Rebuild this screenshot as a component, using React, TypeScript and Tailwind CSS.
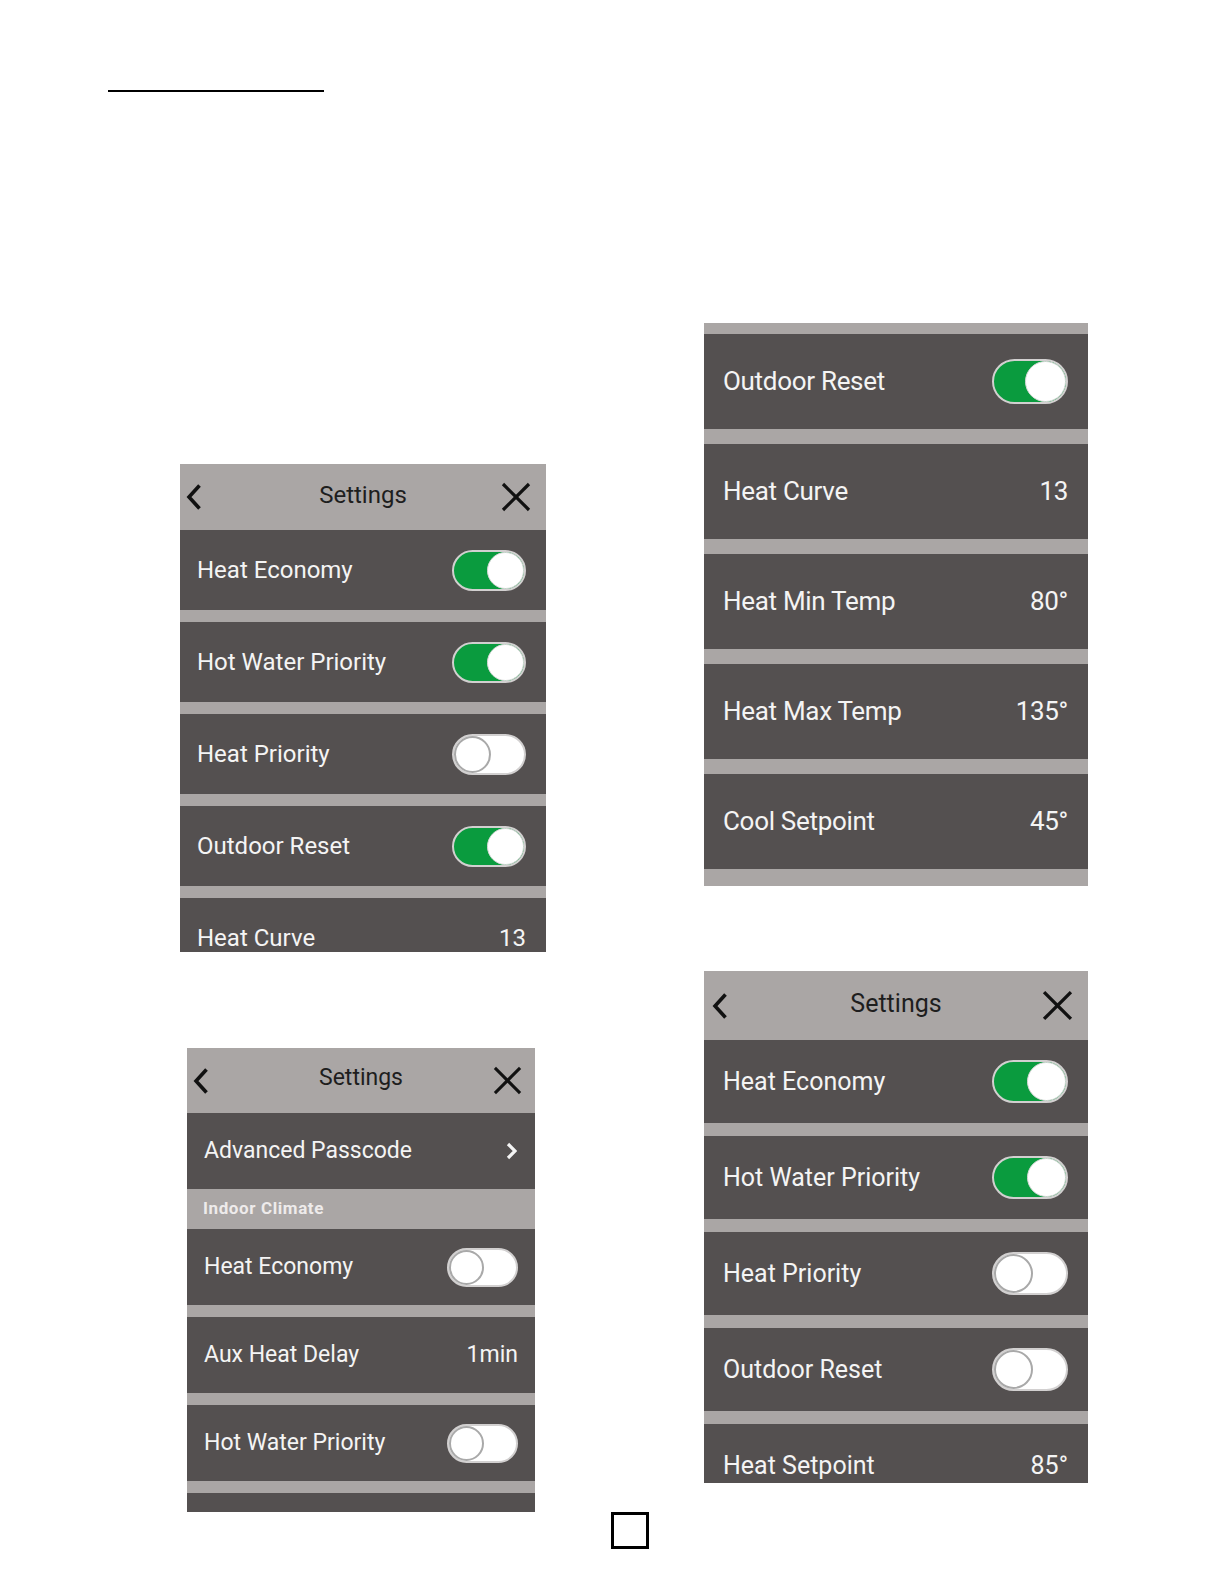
import React from "react";

type Row =
  | { kind: "toggle"; label: string; on: boolean }
  | { kind: "value"; label: string; value: string }
  | { kind: "link"; label: string }
  | { kind: "section"; label: string };

interface Sizes {
  row: string;
  gap: string;
  pad: string;
  track: string;
  knob: string;
}

const DARK = "bg-[#545050]";
const LIGHT = "bg-[#aaa6a5]";

function Toggle({ on, track, knob }: { on: boolean; track: string; knob: string }) {
  return (
    <div
      className={`flex shrink-0 items-center rounded-full border-2 border-[#d2d0d0] ${track} ${
        on ? "justify-end bg-[#0a9b3e]" : "justify-start bg-white"
      }`}
    >
      <div
        className={`rounded-full bg-white ${knob} ${
          on ? "border border-[#d9d9d9]" : "border-2 border-[#a9a9a9]"
        }`}
      />
    </div>
  );
}

function ChevronLeft() {
  return (
    <svg width="16" height="28" viewBox="0 0 16 28" fill="none">
      <polyline points="13.5,2.5 3,14 13.5,25.5" stroke="#111" strokeWidth="3.6" />
    </svg>
  );
}

function CloseX({ size }: { size: number }) {
  return (
    <svg width={size} height={size} viewBox="0 0 30 30" fill="none">
      <line x1="2" y1="2" x2="28" y2="28" stroke="#111" strokeWidth="3.2" />
      <line x1="28" y1="2" x2="2" y2="28" stroke="#111" strokeWidth="3.2" />
    </svg>
  );
}

function ChevronRight() {
  return (
    <svg width="11" height="18" viewBox="0 0 11 18" fill="none">
      <polyline points="2,2 9,9 2,16" stroke="#f4f4f4" strokeWidth="3.2" />
    </svg>
  );
}

function Header({ height, text, left, right, x }: { height: string; text: string; left: string; right: string; x: number }) {
  return (
    <div className={`grid shrink-0 grid-cols-[1fr_auto_1fr] items-center ${LIGHT} ${height}`}>
      <div className={`justify-self-start ${left}`}>
        <ChevronLeft />
      </div>
      <div className="pb-[4px] text-[#1e1e1e]">{text}</div>
      <div className={`justify-self-end ${right}`}>
        <CloseX size={x} />
      </div>
    </div>
  );
}

function Rows({ rows, s }: { rows: Row[]; s: Sizes }) {
  return (
    <>
      {rows.map((r, i) => {
        const next = rows[i + 1];
        const needGap = r.kind !== "section" && next && next.kind !== "section";
        if (r.kind === "section") {
          return (
            <div
              key={i}
              className={`flex h-[40px] shrink-0 items-center pl-[16px] ${LIGHT} text-[17px] font-bold tracking-[0.6px] text-[#eeebeb]`}
            >
              {r.label}
            </div>
          );
        }
        return (
          <React.Fragment key={i}>
            <div className={`flex shrink-0 items-center justify-between ${DARK} ${s.row} ${s.pad} text-[#f4f4f4]`}>
              <span>{r.label}</span>
              {r.kind === "toggle" && <Toggle on={r.on} track={s.track} knob={s.knob} />}
              {r.kind === "value" && <span>{r.value}</span>}
              {r.kind === "link" && (
                <span className="mr-[1px]">
                  <ChevronRight />
                </span>
              )}
            </div>
            {needGap && <div className={`shrink-0 ${LIGHT} ${s.gap}`} />}
          </React.Fragment>
        );
      })}
    </>
  );
}

const s1: Sizes = {
  row: "h-[80px]",
  gap: "h-[12px]",
  pad: "pl-[17px] pr-[20px]",
  track: "w-[74px] h-[41px]",
  knob: "w-[37px] h-[37px]",
};

const s2: Sizes = {
  row: "h-[95px]",
  gap: "h-[15px]",
  pad: "pl-[19px] pr-[20px]",
  track: "w-[76px] h-[45px]",
  knob: "w-[41px] h-[41px]",
};

const s3: Sizes = {
  row: "h-[76px]",
  gap: "h-[12px]",
  pad: "pl-[17px] pr-[17px]",
  track: "w-[71px] h-[39px]",
  knob: "w-[35px] h-[35px]",
};

const s4: Sizes = {
  row: "h-[83px]",
  gap: "h-[13px]",
  pad: "pl-[19px] pr-[20px]",
  track: "w-[76px] h-[43px]",
  knob: "w-[39px] h-[39px]",
};

export default function App() {
  return (
    <div
      className="h-[1584px] w-[1224px] overflow-hidden bg-white"
      style={{ fontFamily: "Roboto, 'Liberation Sans', Arial, sans-serif" }}
    >
      <div className="ml-[108px] pt-[90px]">
        <div className="h-[2px] w-[216px] bg-black" />
      </div>

      <div className="flex items-start">
        {/* left column */}
        <div className="ml-[180px] flex flex-col">
          <div className="mt-[372px] flex h-[488px] w-[366px] flex-col overflow-hidden text-[24px]">
            <Header height="h-[66px]" text="Settings" left="ml-[6px]" right="mr-[15px]" x={30} />
            <Rows
              s={s1}
              rows={[
                { kind: "toggle", label: "Heat Economy", on: true },
                { kind: "toggle", label: "Hot Water Priority", on: true },
                { kind: "toggle", label: "Heat Priority", on: false },
                { kind: "toggle", label: "Outdoor Reset", on: true },
                { kind: "value", label: "Heat Curve", value: "13" },
              ]}
            />
          </div>

          <div className="ml-[7px] mt-[96px] flex h-[464px] w-[348px] flex-col overflow-hidden text-[23px]">
            <Header height="h-[65px]" text="Settings" left="ml-[6px]" right="mr-[13px]" x={29} />
            <Rows
              s={s3}
              rows={[
                { kind: "link", label: "Advanced Passcode" },
                { kind: "section", label: "Indoor Climate" },
                { kind: "toggle", label: "Heat Economy", on: false },
                { kind: "value", label: "Aux Heat Delay", value: "1min" },
                { kind: "toggle", label: "Hot Water Priority", on: false },
                { kind: "toggle", label: "", on: false },
              ]}
            />
          </div>
        </div>

        {/* right column */}
        <div className="ml-[158px] flex flex-col">
          <div className="mt-[231px] flex h-[563px] w-[384px] flex-col overflow-hidden text-[26px] tracking-[-0.3px]">
            <div className={`h-[11px] shrink-0 ${LIGHT}`} />
            <Rows
              s={s2}
              rows={[
                { kind: "toggle", label: "Outdoor Reset", on: true },
                { kind: "value", label: "Heat Curve", value: "13" },
                { kind: "value", label: "Heat Min Temp", value: "80°" },
                { kind: "value", label: "Heat Max Temp", value: "135°" },
                { kind: "value", label: "Cool Setpoint", value: "45°" },
              ]}
            />
            <div className={`h-[17px] shrink-0 ${LIGHT}`} />
          </div>

          <div className="mt-[85px] flex h-[512px] w-[384px] flex-col overflow-hidden text-[25px]">
            <Header height="h-[69px]" text="Settings" left="ml-[8px]" right="mr-[15px]" x={31} />
            <Rows
              s={s4}
              rows={[
                { kind: "toggle", label: "Heat Economy", on: true },
                { kind: "toggle", label: "Hot Water Priority", on: true },
                { kind: "toggle", label: "Heat Priority", on: false },
                { kind: "toggle", label: "Outdoor Reset", on: false },
                { kind: "value", label: "Heat Setpoint", value: "85°" },
              ]}
            />
          </div>
        </div>
      </div>

      <div className="ml-[611px] h-[37px] w-[38px] border-[3px] border-black" />
    </div>
  );
}
